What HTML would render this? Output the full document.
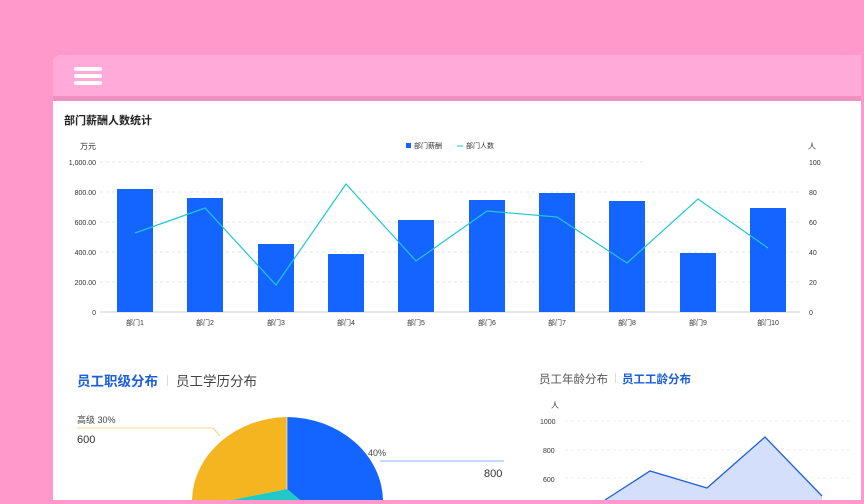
<!DOCTYPE html><html><head><meta charset="utf-8"><style>
body{margin:0;width:864px;height:504px;overflow:hidden;background:#ff99cc;font-family:"Liberation Sans","Noto Sans CJK SC",sans-serif;position:relative}
.card{position:absolute;left:53px;top:55px;width:808px;height:445px;background:#fff;border-radius:8px 0 0 0;overflow:hidden}
.hd{height:41px;background:#ffaad8;border-bottom:5px solid #f090c0}
</style></head><body>
<div class="card"><div class="hd"></div></div>
<div style="position:absolute;left:74px;top:67px">
<div style="width:28px;height:4px;background:#fff;border-radius:2px;margin-bottom:3px"></div>
<div style="width:28px;height:4px;background:#fff;border-radius:2px;margin-bottom:3px"></div>
<div style="width:28px;height:4px;background:#fff;border-radius:2px"></div></div>
<svg width="864" height="504" style="position:absolute;left:0;top:0" font-family="Liberation Sans,Noto Sans CJK SC,sans-serif">
<text x="64" y="124" font-size="11" fill="#222" font-weight="bold">部门薪酬人数统计</text>
<text x="80" y="149" font-size="8" fill="#333">万元</text>
<text x="808" y="149" font-size="8" fill="#333">人</text>
<rect x="406" y="143" width="5" height="5" fill="#1464ff"/><text x="414" y="148" font-size="7" fill="#333">部门薪酬</text>
<line x1="457" y1="146" x2="463" y2="146" stroke="#20c8d0"/><text x="466" y="148" font-size="7" fill="#333">部门人数</text>
<g stroke="#e6e6e6" stroke-dasharray="3,3"><line x1="100" y1="162" x2="645" y2="162"/><line x1="100" y1="192" x2="800" y2="192"/><line x1="100" y1="222" x2="800" y2="222"/><line x1="100" y1="252" x2="800" y2="252"/><line x1="100" y1="282" x2="800" y2="282"/></g>
<line x1="100" y1="312" x2="800" y2="312" stroke="#ccc"/>
<g font-size="7" fill="#333" text-anchor="end"><text x="96" y="165">1,000.00</text><text x="96" y="195">800.00</text><text x="96" y="225">600.00</text><text x="96" y="255">400.00</text><text x="96" y="285">200.00</text><text x="96" y="315">0</text></g>
<g font-size="7" fill="#333"><text x="809" y="165">100</text><text x="809" y="195">80</text><text x="809" y="225">60</text><text x="809" y="255">40</text><text x="809" y="285">20</text><text x="809" y="315">0</text></g>
<g fill="#1464ff"><rect x="117" y="189" width="36" height="123"/><rect x="187" y="198" width="36" height="114"/><rect x="258" y="244" width="36" height="68"/><rect x="328" y="254" width="36" height="58"/><rect x="398" y="220" width="36" height="92"/><rect x="469" y="200" width="36" height="112"/><rect x="539" y="193" width="36" height="119"/><rect x="609" y="201" width="36" height="111"/><rect x="680" y="253" width="36" height="59"/><rect x="750" y="208" width="36" height="104"/></g>
<polyline fill="none" stroke="#20c8d0" stroke-width="1.2" points="135,233 205,208 276,285 346,184 416,261 487,211 557,217 627,263 698,199 768,248"/>
<g font-size="7" fill="#333" text-anchor="middle"><text x="135" y="325">部门1</text><text x="205" y="325">部门2</text><text x="276" y="325">部门3</text><text x="346" y="325">部门4</text><text x="416" y="325">部门5</text><text x="487" y="325">部门6</text><text x="557" y="325">部门7</text><text x="627" y="325">部门8</text><text x="698" y="325">部门9</text><text x="768" y="325">部门10</text></g>
<text x="77" y="386" font-size="13.5" fill="#1a5fd8" font-weight="bold">员工职级分布</text><rect x="167" y="375" width="1" height="11" fill="#ddd"/><text x="176" y="386" font-size="13.5" fill="#444">员工学历分布</text>
<text x="77" y="423" font-size="9" fill="#444">高级 30%</text><line x1="77" y1="428" x2="213" y2="428" stroke="#f5b520" stroke-width="0.6"/><line x1="213" y1="428" x2="220" y2="436" stroke="#f5b520" stroke-width="0.6"/>
<text x="77" y="443" font-size="11" fill="#333">600</text>
<path d="M287,417 A97,85 0 0 1 383,500 L300,500 L287,489 Z" fill="#1464ff"/>
<path d="M287,417 A97,85 0 0 0 192,500 L232,500 L287,489 Z" fill="#f5b520"/>
<path d="M232,500 L287,489 L300,500 Z" fill="#20c8c8"/>
<line x1="287" y1="417" x2="287" y2="489" stroke="#fff" stroke-width="0.6"/>
<text x="368" y="456" font-size="9" fill="#444">40%</text><line x1="380" y1="461" x2="504" y2="461" stroke="#1464ff" stroke-width="0.6"/><text x="484" y="477" font-size="11" fill="#333">800</text>
<text x="539" y="383" font-size="11.5" fill="#555">员工年龄分布</text><rect x="615" y="373" width="1" height="10" fill="#ddd"/><text x="622" y="383" font-size="11.5" fill="#1a5fd8" font-weight="bold">员工工龄分布</text>
<text x="551" y="408" font-size="8" fill="#333">人</text>
<g font-size="7" fill="#333"><text x="540" y="424">1000</text><text x="543" y="453">800</text><text x="543" y="482">600</text></g>
<g stroke="#eee" stroke-dasharray="3,3"><line x1="565" y1="421" x2="852" y2="421"/><line x1="565" y1="450" x2="852" y2="450"/><line x1="565" y1="478" x2="852" y2="478"/></g>
<path d="M605,500 L650,471 L707,488 L765,437 L822,496 L822,500 Z" fill="#d4e0fb"/>
<polyline fill="none" stroke="#2060d8" stroke-width="1.3" points="605,500 650,471 707,488 765,437 822,496"/>
</svg>
<div style="position:absolute;left:0;top:500px;width:864px;height:4px;background:#ff99cc"></div>
</body></html>
